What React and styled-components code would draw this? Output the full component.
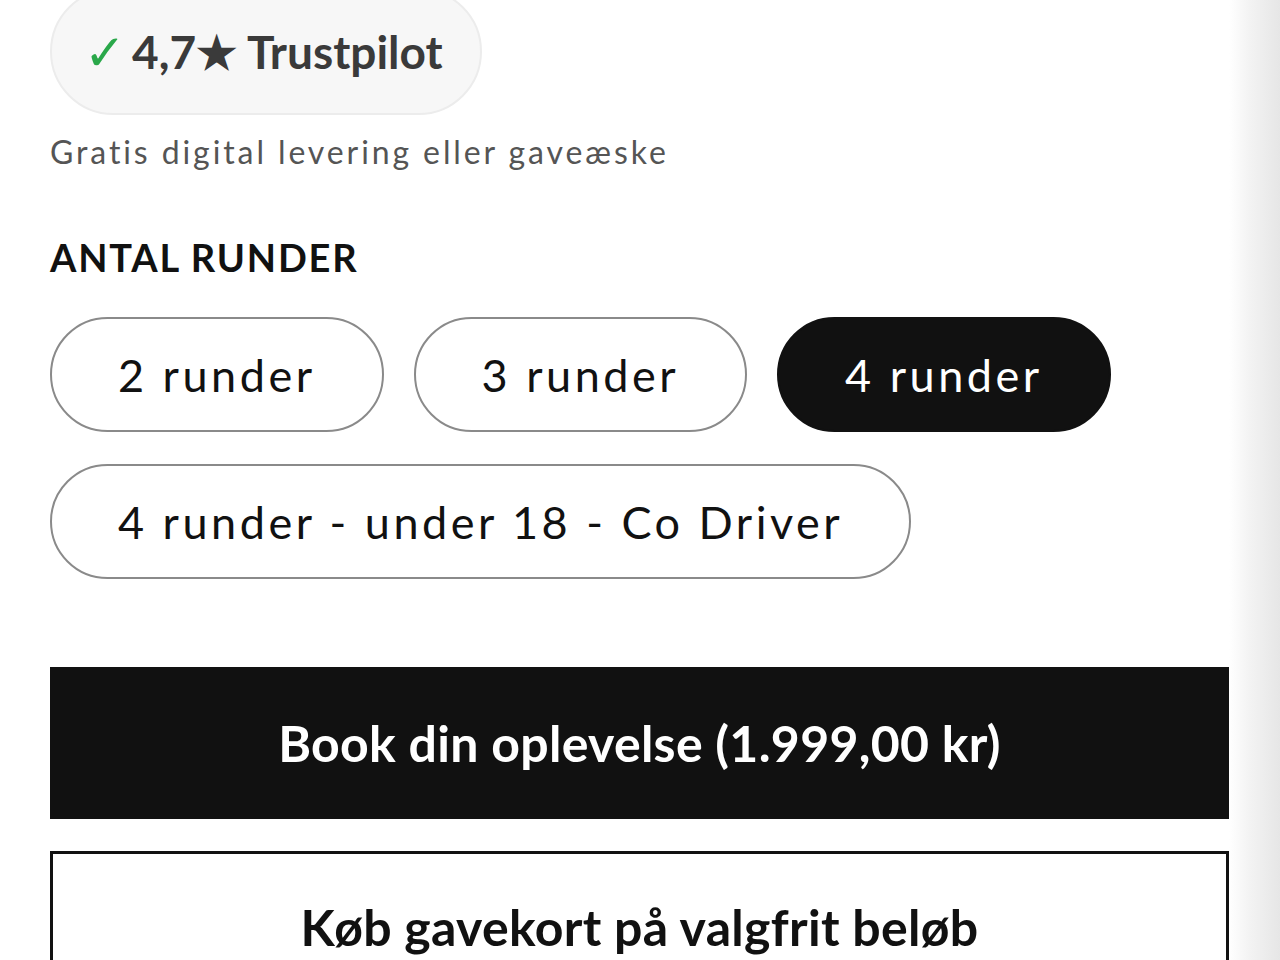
import React from 'react'
import styled, { createGlobalStyle } from 'styled-components'

const Global = createGlobalStyle`
  html, body { margin: 0; padding: 0; background: #fff; }
  body { font-family: "Lato", "Noto Sans", sans-serif; color: #111; }
`

const Page = styled.div`
  display: flex;
  width: 1280px;
  height: 960px;
  overflow: hidden;
`

const Content = styled.div`
  flex: 1;
  padding: 0 0 0 50px;
  display: flex;
  flex-direction: column;
  & > * { flex-shrink: 0; }
`

const Edge = styled.div`
  width: 51px;
  flex-shrink: 0;
  background: linear-gradient(90deg, #fff 0%, #f3f3f3 40%, #e6e6e6 100%);
`

const TrustPill = styled.div`
  align-self: flex-start;
  margin-top: -12px;
  height: 127px;
  box-sizing: border-box;
  padding: 0 37px 0 32px;
  display: flex;
  align-items: center;
  gap: 6px;
  background: #f7f7f7;
  border: 2px solid #ececec;
  border-radius: 64px;
  font-weight: 700;
  font-size: 46px;
  color: #3a3a3a;
`

const Check = styled.span`
  color: #2aa84a;
  font-weight: 400;
  font-size: 50px;
`

const Note = styled.p`
  margin: 18px 0 0;
  font-size: 32px;
  line-height: 38px;
  letter-spacing: 2.9px;
  color: #555;
`

const Heading = styled.h3`
  margin: 63px 0 0;
  font-size: 38px;
  line-height: 46px;
  font-weight: 700;
  letter-spacing: 1.8px;
  color: #111;
`

const Options = styled.div`
  margin-top: 37px;
  display: flex;
  flex-wrap: wrap;
  gap: 32px 30px;
  max-width: 1100px;
`

const Option = styled.button`
  height: 115px;
  box-sizing: border-box;
  padding: 0 66px;
  border-radius: 58px;
  border: 2px solid ${p => (p.$active ? '#111' : '#8a8a8a')};
  background: ${p => (p.$active ? '#111' : '#fff')};
  color: ${p => (p.$active ? '#fff' : '#111')};
  font-family: "Lato", "Noto Sans", sans-serif;
  font-size: 45px;
  letter-spacing: 3.5px;
  cursor: pointer;
`

const Actions = styled.div`
  margin-top: 88px;
  width: 1179px;
  display: flex;
  flex-direction: column;
  gap: 32px;
`

const Action = styled.button`
  height: 152px;
  box-sizing: border-box;
  border: 3px solid #111;
  background: ${p => (p.$primary ? '#111' : '#fff')};
  color: ${p => (p.$primary ? '#fff' : '#111')};
  font-family: "Lato", "Noto Sans", sans-serif;
  font-weight: 700;
  font-size: 50px;
  letter-spacing: 0.3px;
  cursor: pointer;
`

const rounds = [
  '2 runder',
  '3 runder',
  '4 runder',
  '4 runder - under 18 - Co Driver',
]

export default function App() {
  return (
    <Page>
      <Global />
      <Content>
        <TrustPill>
          <Check>✓</Check>
          <span>4,7★ Trustpilot</span>
        </TrustPill>
        <Note>Gratis digital levering eller gaveæske</Note>
        <Heading>ANTAL RUNDER</Heading>
        <Options>
          {rounds.map((r, i) => (
            <Option key={r} $active={i === 2}>{r}</Option>
          ))}
        </Options>
        <Actions>
          <Action $primary>Book din oplevelse (1.999,00 kr)</Action>
          <Action>Køb gavekort på valgfrit beløb</Action>
        </Actions>
      </Content>
      <Edge />
    </Page>
  )
}
